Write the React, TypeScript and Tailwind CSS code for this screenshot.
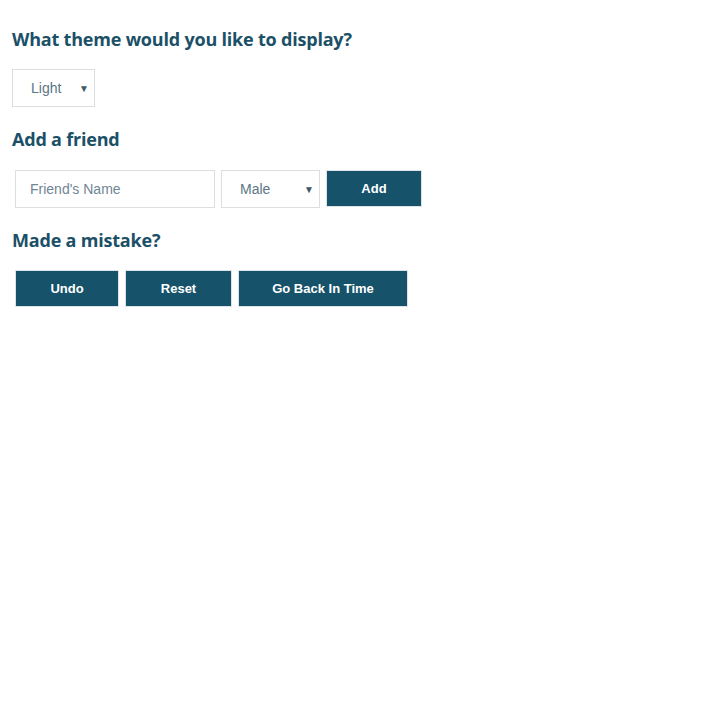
import { useState } from "react";

const heading =
  "font-['Open_Sans',sans-serif] font-bold text-[18px] leading-[24px] text-[#1b5067] tracking-[-0.2px]";
const btn =
  "h-[37px] border border-[#dde3e7] bg-[#16526a] text-white text-[13px] font-bold font-['Liberation_Sans',Arial,sans-serif]";

function Select({
  value,
  options,
  onChange,
  className,
}: {
  value: string;
  options: string[];
  onChange: (v: string) => void;
  className: string;
}) {
  return (
    <div className={"relative " + className}>
      <select
        value={value}
        onChange={(e) => onChange(e.target.value)}
        className="w-full h-full appearance-none bg-white border border-[#dcdfe2] pl-[18px] text-[14px] text-[#5b7684] font-['Liberation_Sans',Arial,sans-serif] outline-none"
      >
        {options.map((o) => (
          <option key={o}>{o}</option>
        ))}
      </select>
      {/* dropdown arrow */}
      <span className="pointer-events-none absolute right-[6px] top-1/2 -translate-y-1/2 text-[10px] text-[#3d5866]">
        ▼
      </span>
    </div>
  );
}

export default function App() {
  const [theme, setTheme] = useState("Light");
  const [gender, setGender] = useState("Male");
  const [name, setName] = useState("");

  return (
    <div className="min-h-screen bg-white px-3 pt-[27px]">
      <h2 className={heading}>What theme would you like to display?</h2>
      <div className="mt-[18px] flex">
        <Select
          value={theme}
          options={["Light", "Dark"]}
          onChange={setTheme}
          className="w-[83px] h-[38px]"
        />
      </div>

      <h2 className={heading + " mt-[20px]"}>Add a friend</h2>
      <div className="mt-[19px] flex items-start gap-[6px] pl-[3px]">
        <input
          value={name}
          onChange={(e) => setName(e.target.value)}
          placeholder="Friend's Name"
          className="w-[200px] h-[38px] border border-[#dcdfe2] px-[14px] text-[14px] text-[#5b7684] placeholder-[#6f8693] font-['Liberation_Sans',Arial,sans-serif] outline-none"
        />
        <Select
          value={gender}
          options={["Male", "Female"]}
          onChange={setGender}
          className="w-[99px] h-[38px]"
        />
        <button className={btn + " w-[96px]"}>Add</button>
      </div>

      <h2 className={heading + " mt-[20px]"}>Made a mistake?</h2>
      <div className="mt-[18px] flex gap-[6px] pl-[3px]">
        <button className={btn + " w-[104px]"}>Undo</button>
        <button className={btn + " w-[107px]"}>Reset</button>
        <button className={btn + " w-[170px]"}>Go Back In Time</button>
      </div>
    </div>
  );
}
